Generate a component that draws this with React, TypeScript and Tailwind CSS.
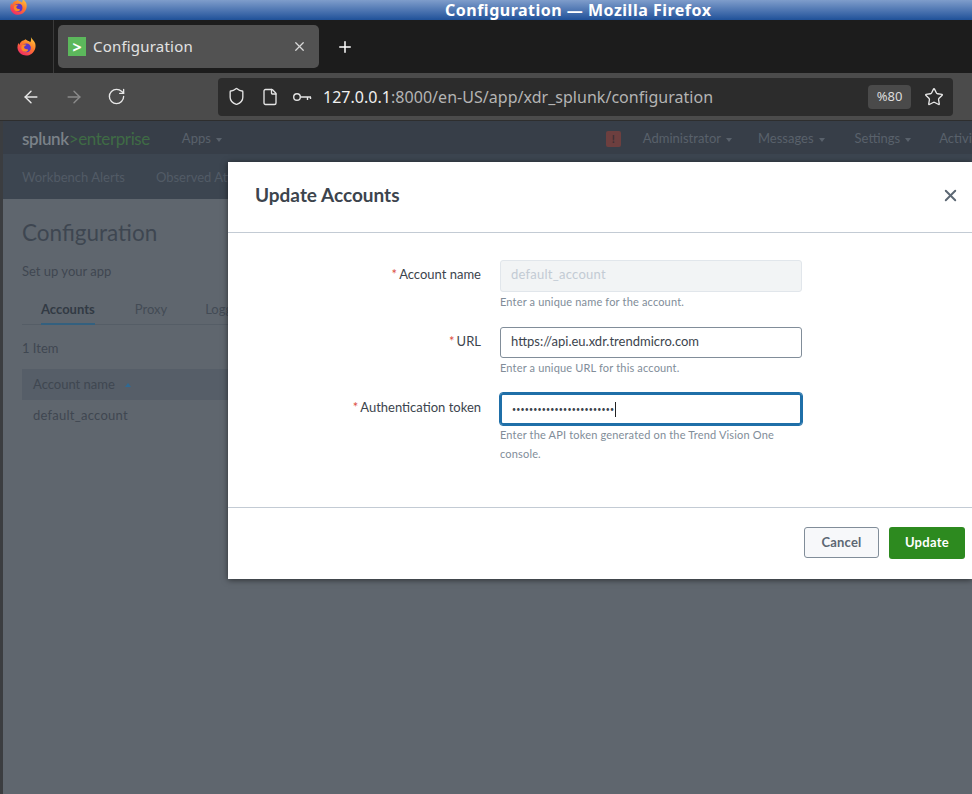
import { ArrowLeft, ArrowRight, RotateCw, Shield, File, X, Plus, Star } from "lucide-react";

function FirefoxLogo({ size }: { size: number }) {
  return (
    <svg width={size} height={size} viewBox="0 0 24 24" aria-hidden="true">
      <defs>
        <linearGradient id="ff" x1="0.8" y1="0" x2="0.2" y2="1">
          <stop offset="0" stopColor="#ffcb3d" />
          <stop offset="0.45" stopColor="#ff7a2b" />
          <stop offset="1" stopColor="#f0246a" />
        </linearGradient>
      </defs>
      <path d="M17 1c.6 2.200 3.600 3.600 4.800 7 1.500 4.500-.2 9.500-3.800 12.200-3.700 2.800-9 2.900-12.600.2C2.300 18.100 1 14.300 1.900 10.600c.2-1 .6-1.900 1.200-2.700.1 1 .5 1.700 1 2.200.2-2 1.400-3.700 3.200-4.600 1.200-.6 2.700-.8 3.500-1.900C12 5 14.800 5.300 16.400 7 17.200 5 17.600 3 17 1z" fill="url(#ff)" />
      <circle cx="12" cy="13.500" r="5" fill="#5b36c9" />
      <path d="M6.500 11c1.500-1.200 4-1.500 5.500-.8-1.500.5-2.600 1.500-2.800 3 .5 1.300 2.200 2.200 4 1.800 1 .8.500 2-.8 2.700-1.600.8-3.500.4-4.900-.8C6 15.500 5.800 13 6.500 11z" fill="#ff8a25" />
    </svg>
  );
}

function Caret() {
  return <span className="ml-[5px] inline-block border-x-[3px] border-t-[4px] border-x-transparent border-t-[#59616b] align-middle" />;
}

function TopLink({ label, className }: { label: string; className: string }) {
  return (
    <span className={`shrink-0 text-[13px] whitespace-nowrap text-[#59616b] ${className}`}>
      {label}
      <Caret />
    </span>
  );
}

function Field({
  label,
  help,
  children,
}: {
  label: string;
  help: string[];
  children: React.ReactNode;
}) {
  return (
    <div className="flex">
      <div className="w-[253px] h-[30px] flex items-center justify-end text-[13px] text-[#3c444d]">
        <span className="mr-[2px] text-[#dc4e41]">*</span>
        {label}
      </div>
      <div className="ml-[19px] w-[302px]">
        {children}
        {help.map((line) => (
          <p key={line} className="text-[11px] leading-[19px] tracking-[0.17px] text-[#818d99] whitespace-nowrap">
            {line}
          </p>
        ))}
      </div>
    </div>
  );
}

export default function App() {
  return (
    <div className="relative w-[972px] h-[794px] overflow-hidden flex flex-col bg-[#5f666e] font-['Lato','Liberation_Sans',sans-serif]">
      {/* window title */}
      <div className="h-[20px] shrink-0 relative flex items-center pl-[445px] bg-gradient-to-b from-[#7f9dcb] to-[#1f5199]">
        <div className="absolute left-[9px] top-[-3px]">
          <FirefoxLogo size={19} />
        </div>
        <span className="text-[16px] font-bold text-white font-['Noto_Sans',sans-serif] tracking-[0.5px] whitespace-nowrap">
          Configuration — Mozilla Firefox
        </span>
      </div>

      {/* tab strip */}
      <div className="h-[53px] shrink-0 flex bg-[#1c1c1c] font-['Noto_Sans',sans-serif]">
        <div className="w-[54px] flex items-center justify-center border-r border-[#3a3a3a]">
          <FirefoxLogo size={21} />
        </div>
        <div className="ml-[4px] mt-[5px] w-[261px] h-[43px] rounded-[5px] bg-[#525252] flex items-center px-[10px]">
          <div className="w-[18px] h-[19px] bg-[#5cb85c] flex items-center justify-center text-white text-[16px] font-bold leading-none">
            &gt;
          </div>
          <span className="ml-[7px] flex-1 text-[15px] text-[#e2e2e2] tracking-[0.2px]">Configuration</span>
          <X size={15} className="text-[#d8d8d8] mr-[2px]" />
        </div>
        <div className="ml-[17px] flex items-center">
          <Plus size={18} className="text-white" />
        </div>
      </div>

      {/* url toolbar */}
      <div className="h-[48px] shrink-0 flex items-center bg-[#4b4b4b] border-b border-[#2e2e2e] font-['Noto_Sans',sans-serif]">
        <ArrowLeft size={20} strokeWidth={1.7} className="ml-[21px] text-[#e8e8e8]" />
        <ArrowRight size={20} strokeWidth={1.7} className="ml-[23px] text-[#8b8b8b]" />
        <RotateCw size={19} strokeWidth={1.7} className="ml-[23px] text-[#e8e8e8]" />
        <div className="ml-[92px] w-[735px] h-[38px] rounded-[4px] bg-[#2c2c2c] flex items-center">
          <Shield size={19} strokeWidth={1.7} className="ml-[9px] text-[#e4e4e4]" />
          <File size={18} strokeWidth={1.8} className="ml-[15px] text-[#e4e4e4]" />
          <svg width="20" height="12" viewBox="0 0 20 12" fill="none" stroke="#e4e4e4" strokeWidth="1.400" className="ml-[13px]" aria-hidden="true">
            <circle cx="5" cy="6" r="3.300" />
            <path d="M8.500 6H19M15.500 6v3M18.500 6v2" />
          </svg>
          <span className="ml-[11px] text-[16px] whitespace-nowrap text-[#b4b4b4] tracking-[0.03px]">
            <span className="text-[#f0f0f0]">127.0.0.1</span>:8000/en-US/app/xdr_splunk/configuration
          </span>
          <div className="ml-auto w-[43px] h-[24px] rounded-[4px] bg-[#4a4a4a] flex items-center justify-center text-[13px] text-[#dcdcdc]">
            %80
          </div>
          <Star size={20} strokeWidth={1.6} className="ml-[13px] mr-[9px] text-[#e8e8e8]" />
        </div>
      </div>

      {/* dimmed splunk page */}
      <div className="flex-1 flex flex-col border-l-[3px] border-[#3b3d40]">
        <div className="h-[33px] shrink-0 flex items-center bg-[#373e48] whitespace-nowrap pt-[3px]">
          <span className="shrink-0 ml-[19px] text-[17px] tracking-[-0.4px] font-semibold text-[#7b8289]">splunk</span>
          <span className="shrink-0 text-[17px] tracking-[-0.4px] text-[#3f6b45]">&gt;enterprise</span>
          <TopLink label="Apps" className="ml-[32px]" />
          <div className="shrink-0 ml-[384px] w-[15px] h-[16px] rounded-[2px] bg-[#6d3f3f] flex items-center justify-center text-[11px] font-bold text-[#3d3034]">
            !
          </div>
          <TopLink label="Administrator" className="ml-[22px]" />
          <TopLink label="Messages" className="ml-[26px]" />
          <TopLink label="Settings" className="ml-[30px]" />
          <span className="shrink-0 ml-[28px] text-[13px] text-[#59616b]">Activity</span>
        </div>
        <div className="h-[45px] shrink-0 flex items-center bg-[#3c4550] text-[13px] whitespace-nowrap text-[#525b66] pt-[2px]">
          <span className="ml-[19px]">Workbench Alerts</span>
          <span className="ml-[31px]">Observed Attack Techniques</span>
        </div>
        <div className="flex-1 pl-[19px] pt-[20px]">
          <h1 className="text-[22.500px] leading-[28px] text-[#3e4651]">Configuration</h1>
          <p className="mt-[16px] text-[13px] leading-[16px] text-[#3f4751]">Set up your app</p>
          <div className="mt-[17px] h-[29px] flex border-b border-[#555d66] text-[13px]">
            <span className="ml-[19px] h-[29px] flex items-center font-bold text-[#323a44] border-b-2 border-[#33607f]">
              Accounts
            </span>
            <span className="ml-[40px] h-[28px] flex items-center text-[#434b55]">Proxy</span>
            <span className="ml-[38px] h-[28px] flex items-center text-[#434b55]">Logging</span>
          </div>
          <p className="mt-[15px] text-[13px] leading-[16px] text-[#3f4751]">1 Item</p>
          <div className="mt-[13px] h-[31px] flex items-center bg-[#565e68] pl-[11px] text-[13px] text-[#3f4751]">
            Account name
            <span className="ml-[10px] inline-block border-x-[3px] border-b-[4px] border-x-transparent border-b-[#2f6a94]" />
          </div>
          <div className="h-[32px] flex items-center pl-[11px] text-[13px] tracking-[0.25px] text-[#3f4751]">default_account</div>
        </div>
      </div>

      {/* modal */}
      <div className="absolute left-[228px] top-[162px] w-[744px] h-[417px] bg-white flex flex-col shadow-[0_1px_6px_rgba(0,0,0,0.55)]">
        <div className="h-[71px] shrink-0 flex items-center justify-between border-b border-[#c3cbd4] pl-[27px] pr-[12px] pb-[4px]">
          <h2 className="text-[19px] font-bold text-[#3c444d]">Update Accounts</h2>
          <X size={19} strokeWidth={2.4} className="text-[#5c6773]" />
        </div>
        <div className="flex-1 flex flex-col pt-[27px]">
          <Field label="Account name" help={["Enter a unique name for the account."]}>
            <div className="h-[32px] rounded-[3px] border border-[#e1e6eb] bg-[#f2f4f5] flex items-center pl-[10px] pb-[2px] text-[13px] tracking-[0.25px] text-[#c3cbd4]">
              default_account
            </div>
          </Field>
          <div className="mt-[16px]">
            <Field label="URL" help={["Enter a unique URL for this account."]}>
              <div className="h-[31px] rounded-[3px] border border-[#818d99] bg-white flex items-center pl-[10px] pb-[2px] text-[13px] text-[#3c444d]">
                https://api.eu.xdr.trendmicro.com
              </div>
            </Field>
          </div>
          <div className="mt-[16px]">
            <Field
              label="Authentication token"
              help={["Enter the API token generated on the Trend Vision One", "console."]}
            >
              <div className="h-[32px] rounded-[3px] border-[2px] border-[#1f6fa8] outline outline-1 outline-[#1f6fa8] bg-white flex items-center pl-[10px] text-[12px] text-[#3c444d]">
                <span className="text-[7px] tracking-[0.2px]">••••••••••••••••••••••••</span>
                <span className="ml-[1px] w-px h-[15px] bg-[#222]" />
              </div>
            </Field>
          </div>
        </div>
        <div className="h-[72px] shrink-0 flex items-start justify-end border-t border-[#c3cbd4] pt-[19px] pr-[7px] gap-[10px]">
          <button className="w-[75px] h-[31px] rounded-[3px] border border-[#818d99] bg-[#f7f8fa] text-[13px] font-bold tracking-[0.2px] text-[#5c6773]">
            Cancel
          </button>
          <button className="w-[76px] h-[32px] rounded-[3px] bg-[#2d8a1f] text-[13px] font-bold tracking-[0.3px] text-white">
            Update
          </button>
        </div>
      </div>
    </div>
  );
}
